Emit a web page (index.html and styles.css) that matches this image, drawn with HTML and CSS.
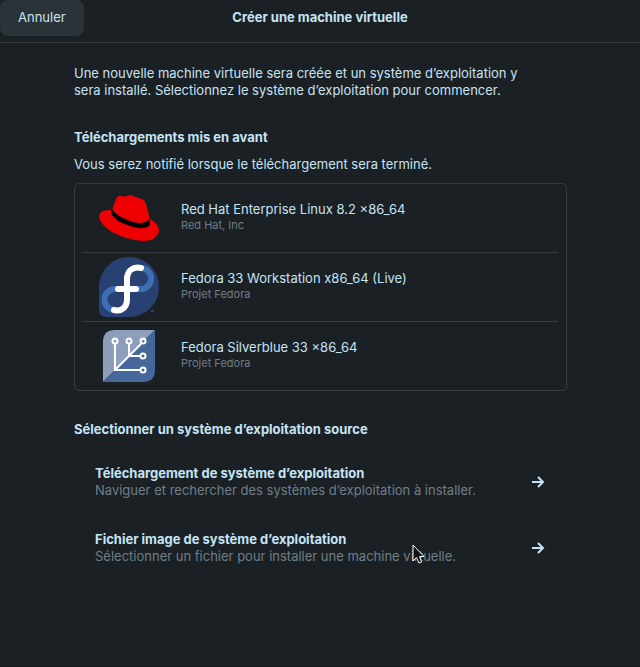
FILE: index.html
```html
<!DOCTYPE html>
<html lang="fr">
<head>
    <meta charset="UTF-8">
    <meta name="viewport" content="width=device-width, initial-scale=1.0">
    <title>Créer une machine virtuelle</title>
    <link rel="stylesheet" href="styles.css">
</head>
<body>

<header class="header">
    <button type="button" class="cancel">Annuler</button>
    <h1>Créer une machine virtuelle</h1>
</header>

<main class="content">
    <p class="intro">Une nouvelle machine virtuelle sera créée et un système d’exploitation y sera installé. Sélectionnez le système d’exploitation pour commencer.</p>

    <section class="featured">
        <h2>Téléchargements mis en avant</h2>
        <p>Vous serez notifié lorsque le téléchargement sera terminé.</p>
        <div class="list">
            <button type="button" class="row">
                <!-- Red Hat -->
                <svg class="logo" viewBox="0 0 60 60" aria-hidden="true">
                    <path fill="#ee0000" d="M13 22 L17 11 Q19 7 23 8 Q26 9 28 8 Q30 6 34 8 L43 11 Q46 12 47 16 L51 31 Q60 36 60 43 Q58 53 44 53 Q28 52 13 44 Q0 36 0 28 Q1 21 13 22 Z"/>
                    <path fill="#000" d="M13 21 Q11 23 13 27 Q17 33 28 37 Q41 42 49 39 Q52 36 50 31 Q48 35 40 35 Q31 34 22 29 Q15 25 13 21 Z"/>
                </svg>
                <span class="text">
                    <span class="name">Red Hat Enterprise Linux 8.2 x86_64</span>
                    <span class="vendor">Red Hat, Inc</span>
                </span>
            </button>
            <button type="button" class="row">
                <!-- Fedora -->
                <svg class="logo" viewBox="0 0 60 60" aria-hidden="true">
                    <path fill="#294172" d="M30 0 A30 30 0 0 1 30 60 H7 Q0 60 0 53 V30 A30 30 0 0 1 30 0 Z"/>
                    <g fill="none" stroke-width="6" stroke-linecap="round">
                        <path stroke="#3c6eb4" d="M43 11 A10.5 10.5 0 0 1 40 32 H28 M20 32 H17 A10.5 10.5 0 1 0 15 53"/>
                        <path stroke="#fff" d="M42 11 C34 9 28 14 28 22 V42 C28 50 23 55 15 53 M19 32 H37"/>
                    </g>
                    <path fill="none" stroke="#3c6eb4" d="M52 54 H55"/>
                </svg>
                <span class="text">
                    <span class="name">Fedora 33 Workstation x86_64 (Live)</span>
                    <span class="vendor">Projet Fedora</span>
                </span>
            </button>
            <button type="button" class="row">
                <!-- Silverblue -->
                <svg class="logo" viewBox="0 0 60 60" aria-hidden="true">
                    <path fill="#8c9eb9" d="M16 4 H56 L4 56 V16 Q4 4 16 4 Z"/>
                    <path fill="#456799" d="M56 4 V44 Q56 56 44 56 H4 Z"/>
                    <g fill="none" stroke="#fff" stroke-width="2">
                        <path d="M16 18 V44 H41 M16 44 L42 18 M30 18 V30 H41"/>
                        <circle cx="16" cy="15" r="2.5"/>
                        <circle cx="30" cy="15" r="2.5"/>
                        <circle cx="44" cy="15" r="2.5"/>
                        <circle cx="44" cy="30" r="2.5"/>
                        <circle cx="44" cy="44" r="2.5"/>
                    </g>
                </svg>
                <span class="text">
                    <span class="name">Fedora Silverblue 33 x86_64</span>
                    <span class="vendor">Projet Fedora</span>
                </span>
            </button>
        </div>
    </section>

    <section class="sources">
        <h2>Sélectionner un système d’exploitation source</h2>
        <button type="button" class="source">
            <span class="text">
                <strong>Téléchargement de système d’exploitation</strong>
                <span class="hint">Naviguer et rechercher des systèmes d’exploitation à installer.</span>
            </span>
            <svg class="arrow" viewBox="0 0 16 16" aria-hidden="true"><path d="M2 8 H13 M8 3 L13 8 L8 13"/></svg>
        </button>
        <button type="button" class="source">
            <span class="text">
                <strong>Fichier image de système d’exploitation</strong>
                <span class="hint">Sélectionner un fichier pour installer une machine virtuelle.</span>
            </span>
            <svg class="arrow" viewBox="0 0 16 16" aria-hidden="true"><path d="M2 8 H13 M8 3 L13 8 L8 13"/></svg>
        </button>
    </section>
</main>

<!-- Mouse pointer -->
<svg class="pointer" viewBox="0 0 14 20" aria-hidden="true">
    <path d="M1 1 V17 L4.5 13.5 L7 19 L9.5 18 L7.5 12.5 H12 Z"/>
</svg>

</body>
</html>
```

FILE: styles.css
```css
/* Basic styling for the dialog */
body {
    margin: 0;
    min-height: 100vh;
    box-sizing: border-box;
    border-bottom: 2px solid #1a1b20;
    background-color: #1b2024;
    color: #c5e4f5;
    font-family: Inter, sans-serif;
    font-size: 13px;
    line-height: 17px;
}
h1, h2, p {
    margin: 0;
    font-size: 13px;
}
button {
    border: 0;
    margin: 0;
    background: none;
    color: inherit;
    font: inherit;
    text-align: left;
}

/* Title bar */
.header {
    display: grid;
    grid-template-columns: 1fr auto 1fr;
    padding-bottom: 6px;
    border-bottom: 1px solid #373e42;
}
.header h1 {
    padding: 9px 0 10px;
}
.cancel {
    justify-self: start;
    padding: 9px 18px 10px;
    border-radius: 8px;
    background-color: #2a3338;
}

.content {
    padding: 22px 73px 22px 74px;
}
.intro {
    padding-right: 24px;
}
.featured, .sources {
    margin-top: 30px;
}
.featured p {
    margin: 10px 0;
}

/* Featured downloads */
.list {
    padding: 0 8px;
    border: 1px solid #373e42;
    border-radius: 5px;
}
.row {
    display: flex;
    align-items: center;
    width: 100%;
    height: 68px;
    padding: 0 16px;
    gap: 22px;
}
.row + .row {
    height: 69px;
    border-top: 1px solid #373e42;
}
.logo {
    flex: none;
    width: 60px;
    height: 60px;
}
.text {
    display: flex;
    flex-direction: column;
}
.row .text {
    padding-bottom: 2px;
}
.vendor {
    color: #6f7f88;
    font-size: 11px;
    line-height: 15px;
}

/* Installation sources */
.sources h2 {
    margin-bottom: 11px;
}
.source {
    display: flex;
    align-items: center;
    justify-content: space-between;
    width: 100%;
    padding: 16px 21px;
}
.hint {
    color: #6f7f88;
}
.arrow {
    flex: none;
    width: 16px;
    height: 16px;
    fill: none;
    stroke: #c5e4f5;
    stroke-width: 2;
}

.pointer {
    position: absolute;
    left: 412px;
    top: 544px;
    width: 14px;
    height: 20px;
    fill: #101010;
    stroke: #fff;
}
```
